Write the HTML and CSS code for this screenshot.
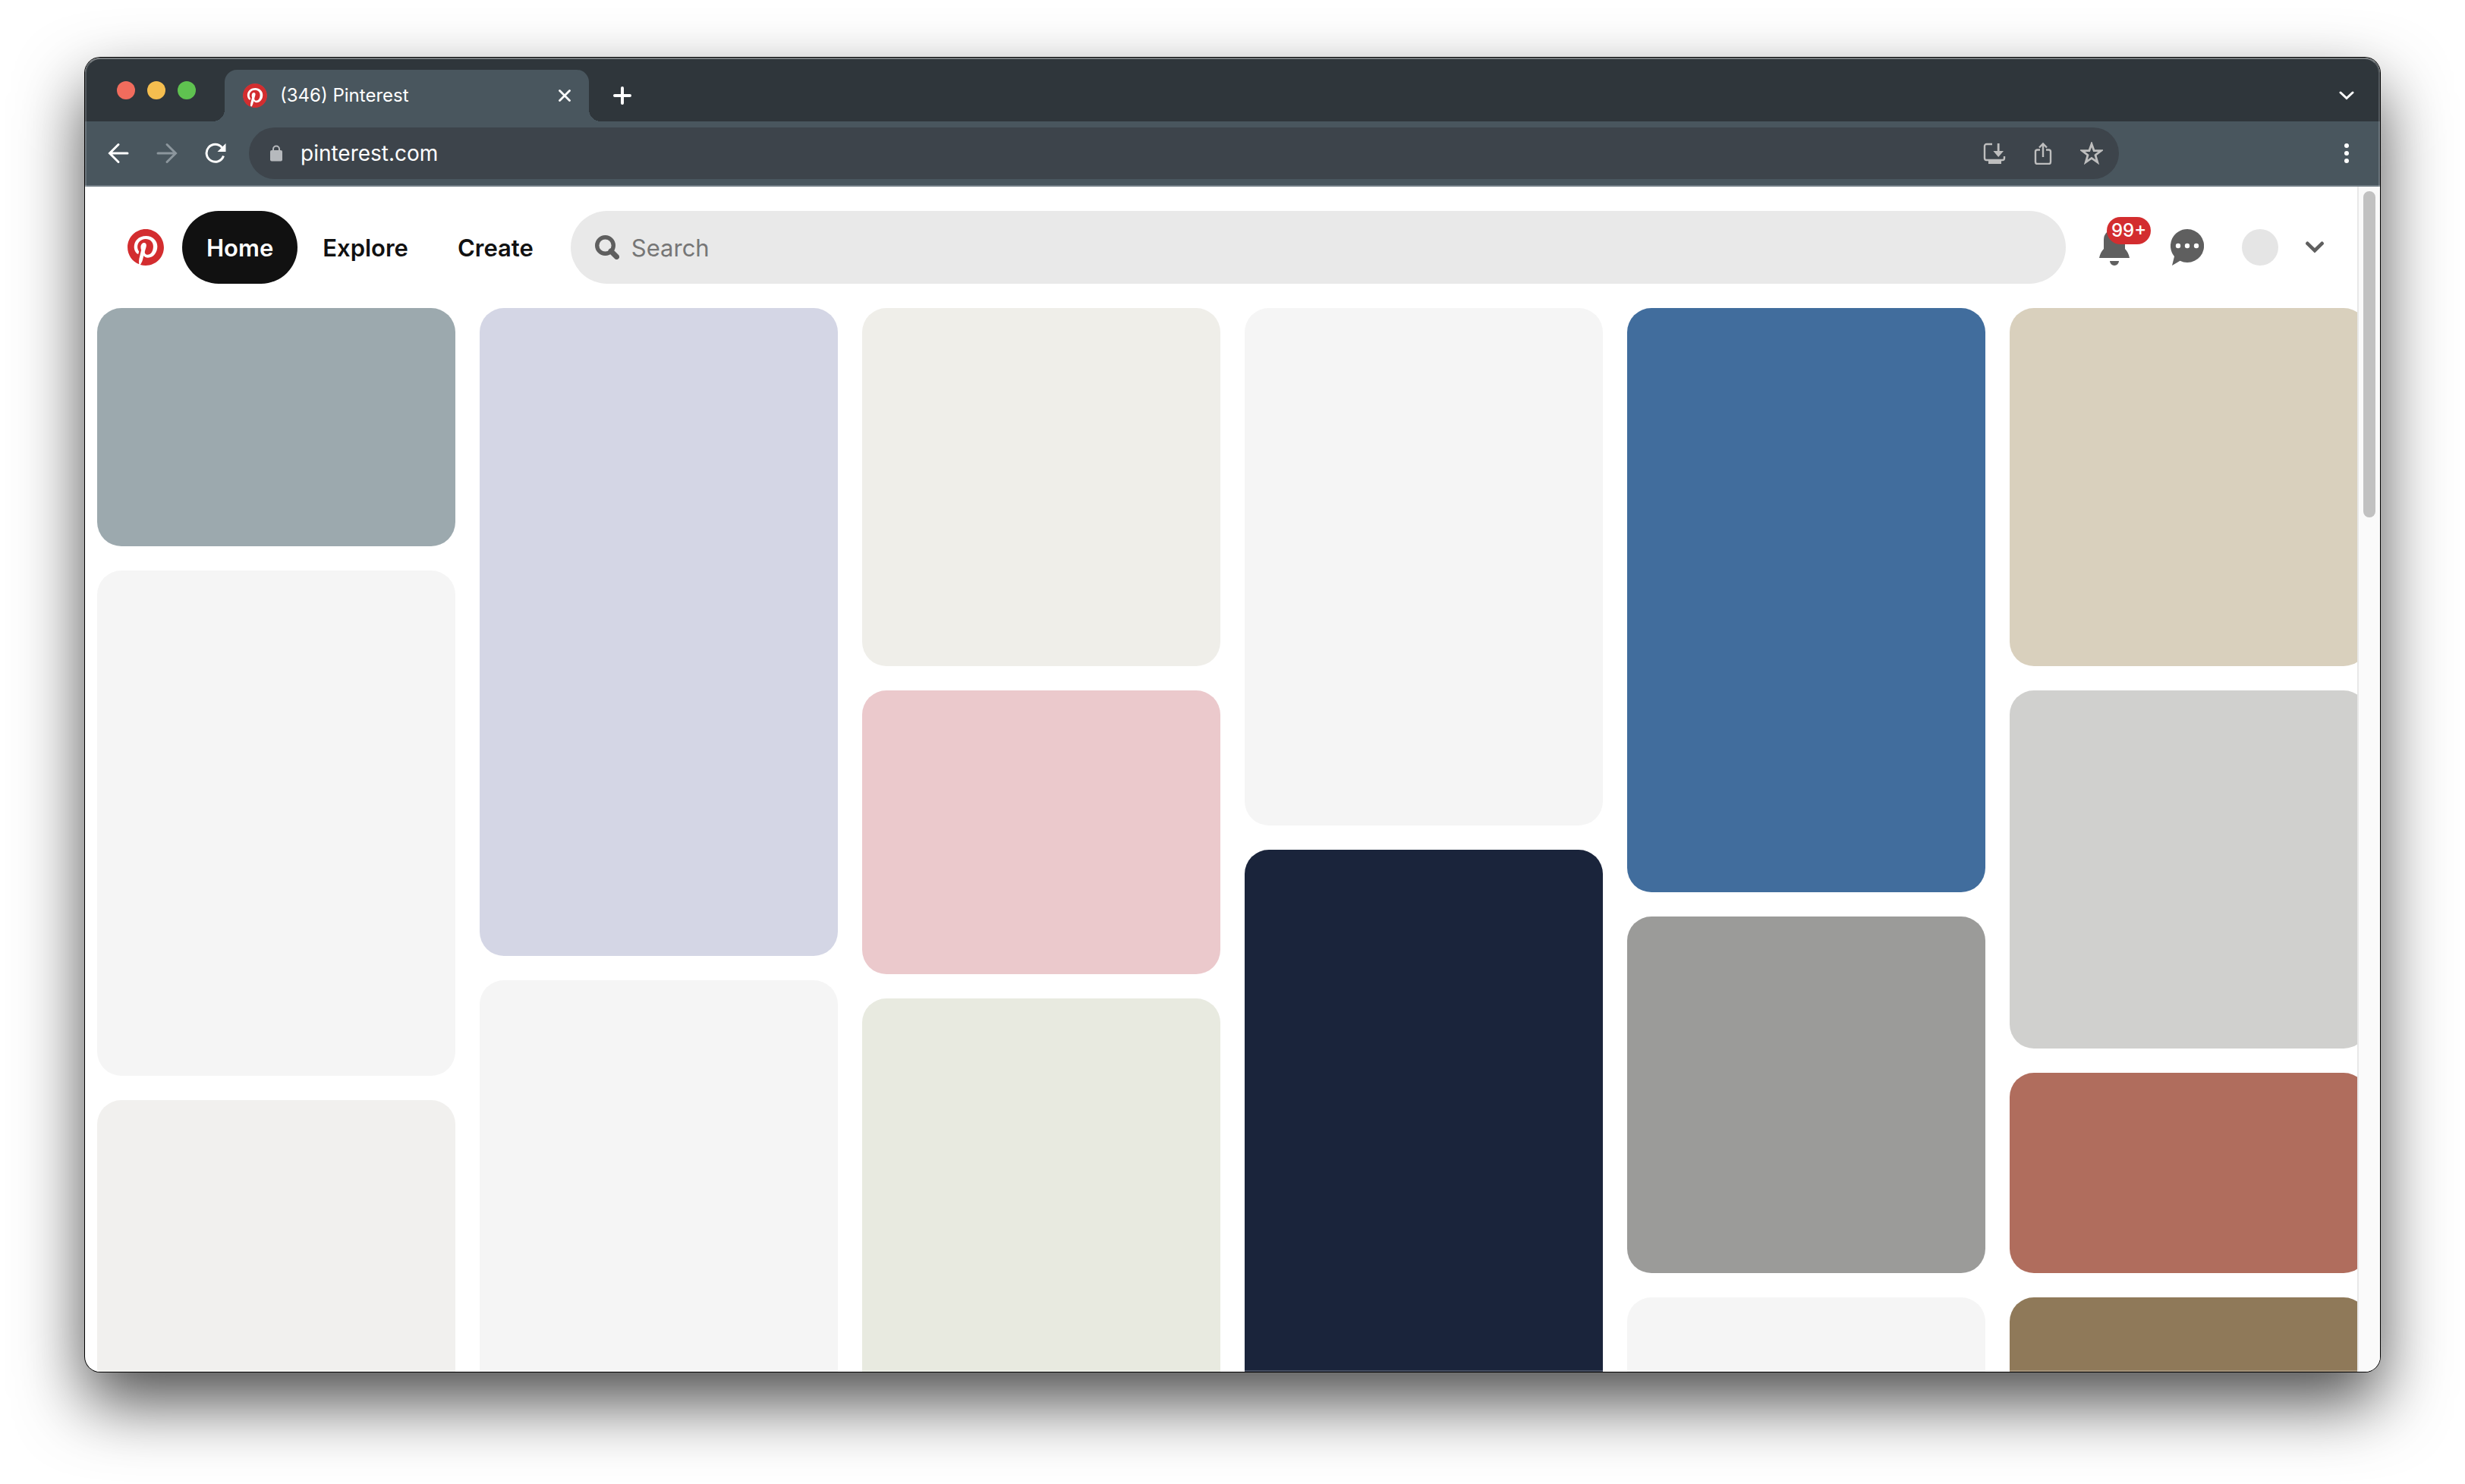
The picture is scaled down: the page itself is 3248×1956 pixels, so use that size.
FILE: index.html
```html
<!DOCTYPE html>
<html lang="en">
<head>
<meta charset="utf-8">
<meta name="viewport" content="width=device-width, initial-scale=1">
<title>(346) Pinterest</title>
<link rel="stylesheet" href="styles.css">
</head>
<body>
<svg class="defs" aria-hidden="true">
  <symbol id="pin-logo" viewBox="0 0 24 24">
    <circle cx="12" cy="12" r="11.500" fill="#fff"/>
    <path fill="#d32d2f" d="M12.017 0C5.396 0 .029 5.367.029 11.987c0 5.079 3.158 9.417 7.618 11.162-.105-.949-.199-2.403.041-3.439.219-.937 1.406-5.957 1.406-5.957s-.359-.72-.359-1.781c0-1.663.967-2.911 2.168-2.911 1.024 0 1.518.769 1.518 1.688 0 1.029-.653 2.567-.992 3.992-.285 1.193.6 2.165 1.775 2.165 2.128 0 3.768-2.245 3.768-5.487 0-2.861-2.063-4.869-5.008-4.869-3.41 0-5.409 2.562-5.409 5.199 0 1.033.394 2.143.889 2.741.099.12.112.225.085.345-.09.375-.293 1.199-.334 1.363-.053.225-.172.271-.401.165-1.495-.69-2.433-2.878-2.433-4.646 0-3.776 2.748-7.252 7.92-7.252 4.158 0 7.392 2.967 7.392 6.923 0 4.135-2.607 7.462-6.233 7.462-1.214 0-2.354-.629-2.758-1.379l-.749 2.848c-.269 1.045-1.004 2.352-1.498 3.146 1.123.345 2.306.535 3.55.535 6.607 0 11.985-5.365 11.985-11.987C23.97 5.39 18.592.026 11.985.026L12.017 0z"/>
  </symbol>
</svg>
<div class="window">
  <div class="tab-strip">
    <div class="lights"><span class="light red"></span><span class="light yellow"></span><span class="light green"></span></div>
    <div class="tab">
      <svg class="favicon" aria-hidden="true"><use href="#pin-logo"/></svg>
      <span class="tab-title">(346) Pinterest</span>
      <button class="icon-button" aria-label="Close tab"><svg width="16" height="16" viewBox="0 0 16 16"><path d="M1.500 1.500l13 13M14.500 1.500l-13 13" fill="none" stroke="#fff" stroke-width="2.800" stroke-linecap="round"/></svg></button>
    </div>
    <button class="icon-button new-tab" aria-label="New tab"><svg width="24" height="24" viewBox="0 0 24 24"><path d="M12 2v20M2 12h20" fill="none" stroke="#fff" stroke-width="4" stroke-linecap="round"/></svg></button>
    <button class="icon-button tab-search" aria-label="Search tabs"><svg width="20" height="12" viewBox="0 0 20 12"><path d="M2 2l8 7.500L18 2" fill="none" stroke="#fff" stroke-width="3" stroke-linecap="round"/></svg></button>
  </div>
  <div class="toolbar">
    <div class="history">
      <button class="icon-button" aria-label="Back"><svg width="28" height="28" viewBox="0 0 28 28"><path d="M26 14H3M14 2.500L2.500 14 14 25.500" fill="none" stroke="#fff" stroke-width="3" stroke-linecap="round"/></svg></button>
      <button class="icon-button" aria-label="Forward"><svg width="28" height="28" viewBox="0 0 28 28"><path d="M2 14h23M14 2.500L25.500 14 14 25.500" fill="none" stroke="#8c969d" stroke-width="3" stroke-linecap="round"/></svg></button>
      <button class="icon-button" aria-label="Reload"><svg width="28" height="28" viewBox="0 0 28 28"><path d="M24.500 17.500A11.500 11.500 0 1 1 22.500 6.500" fill="none" stroke="#fff" stroke-width="3"/><path d="M27.500 1v11h-11z" fill="#fff"/></svg></button>
    </div>
    <div class="address">
      <svg width="16" height="22" viewBox="0 0 16 22" aria-hidden="true"><rect y="7" width="16" height="14.500" rx="2" fill="#b6b9bd"/><path d="M4 8V5.500a4 4 0 0 1 8 0V8" fill="none" stroke="#b6b9bd" stroke-width="2"/></svg>
      <input class="url" aria-label="Address" value="pinterest.com">
      <div class="address-actions">
        <button class="icon-button" aria-label="Install app"><svg width="30" height="30" viewBox="0 0 30 30"><path d="M12 3H4.500A2.500 2.500 0 0 0 2 5.500v16A2.500 2.500 0 0 0 4.500 24h21a2.500 2.500 0 0 0 2.500-2.500V19" fill="none" stroke="#bebebe" stroke-width="2.400"/><path d="M7 24h17v5H7zM18.800 2h2.800v10h5.400l-6.800 8-6.800-8h5.400z" fill="#bebebe"/></svg></button>
        <button class="icon-button" aria-label="Share"><svg width="30" height="30" viewBox="0 0 30 30"><path d="M11 10.500H7.500A2.500 2.500 0 0 0 5 13v13.500A2.500 2.500 0 0 0 7.500 29h15a2.500 2.500 0 0 0 2.500-2.500V13a2.500 2.500 0 0 0-2.500-2.500H19M15 20V3M10 7.500l5-5 5 5" fill="none" stroke="#bebebe" stroke-width="2.400"/></svg></button>
        <button class="icon-button" aria-label="Bookmark"><svg width="30" height="30" viewBox="0 0 30 30"><path d="M15 2.800l3.100 8.700 9.300.2-7.400 5.800 2.700 9.300L15 21.400l-7.700 5.400L10 17.500l-7.400-5.800 9.300-.2z" fill="none" stroke="#bebebe" stroke-width="2.800"/></svg></button>
      </div>
    </div>
    <button class="icon-button more" aria-label="More"><svg width="6" height="26" viewBox="0 0 6 26"><circle cx="3" cy="3" r="3" fill="#fff"/><circle cx="3" cy="13" r="3" fill="#fff"/><circle cx="3" cy="23" r="3" fill="#fff"/></svg></button>
  </div>
  <div class="viewport">
    <div class="page">
      <header class="header">
        <a class="logo" href="#" aria-label="Pinterest"><svg width="48" height="48" aria-hidden="true"><use href="#pin-logo"/></svg></a>
        <nav class="nav"><a class="nav-link current" href="#">Home</a><a class="nav-link" href="#">Explore</a><a class="nav-link" href="#">Create</a></nav>
        <label class="search">
          <svg width="32" height="32" viewBox="0 0 32 32" aria-hidden="true"><circle cx="13.500" cy="13.500" r="10.800" fill="none" stroke="#5f5f5f" stroke-width="5.400"/><path d="M21 21l7.500 7.500" stroke="#5f5f5f" stroke-width="7" stroke-linecap="round"/></svg>
          <input class="search-input" type="search" placeholder="Search" aria-label="Search">
        </label>
        <div class="account">
          <button class="icon-button bell" aria-label="Notifications"><svg width="40" height="48" viewBox="0 0 40 48"><path d="M0 38c1-5 3-9 6-12V14a14 14 0 0 1 28 0v12c3 3 5 7 6 12zM14 42h12a6 6 0 0 1-12 0z" fill="#5f5f5f"/></svg><span class="badge">99+</span></button>
          <button class="icon-button chat" aria-label="Messages"><svg width="44" height="48" viewBox="0 0 44 48"><path d="M22 0a22 22 0 1 1-9.500 41.800L2 48l3-12A22 22 0 0 1 22 0z" fill="#5f5f5f"/><circle cx="10" cy="22" r="3.200" fill="#fff"/><circle cx="22" cy="22" r="3.200" fill="#fff"/><circle cx="34" cy="22" r="3.200" fill="#fff"/></svg></button>
          <button class="avatar" aria-label="Profile"></button>
          <button class="icon-button" aria-label="Account menu"><svg width="24" height="16" viewBox="0 0 24 16"><path d="M2.400 2.800l9.600 9.400 9.600-9.400" fill="none" stroke="#5f5f5f" stroke-width="4.600" stroke-linecap="round"/></svg></button>
        </div>
      </header>
      <main class="pins">
        <div class="column"><a class="pin slate" href="#" aria-label="Pin"></a><a class="pin mist tall-1" href="#" aria-label="Pin"></a><a class="pin pearl rest" href="#" aria-label="Pin"></a></div>
        <div class="column"><a class="pin lavender" href="#" aria-label="Pin"></a><a class="pin mist rest" href="#" aria-label="Pin"></a></div>
        <div class="column"><a class="pin ivory" href="#" aria-label="Pin"></a><a class="pin rose" href="#" aria-label="Pin"></a><a class="pin sage rest" href="#" aria-label="Pin"></a></div>
        <div class="column"><a class="pin mist tall-2" href="#" aria-label="Pin"></a><a class="pin navy rest" href="#" aria-label="Pin"></a></div>
        <div class="column"><a class="pin blue" href="#" aria-label="Pin"></a><a class="pin gray" href="#" aria-label="Pin"></a><a class="pin mist rest" href="#" aria-label="Pin"></a></div>
        <div class="column"><a class="pin sand" href="#" aria-label="Pin"></a><a class="pin silver" href="#" aria-label="Pin"></a><a class="pin clay" href="#" aria-label="Pin"></a><a class="pin olive rest" href="#" aria-label="Pin"></a></div>
      </main>
    </div>
    <div class="scrollbar"><div class="thumb"></div></div>
  </div>
</div>
</body>
</html>
```
FILE: styles.css
```css
* { box-sizing: border-box; }
html { height: 100%; background: #fff; }
body {
  margin: 0;
  height: 100%;
  padding: 76px 112px 148px;
  overflow: hidden;
  font-family: Inter, "Liberation Sans", sans-serif;
}
svg { display: block; flex: none; }
a { color: inherit; text-decoration: none; }
button, input { font: inherit; border: 0; padding: 0; background: none; color: inherit; }
input { outline: 0; min-width: 0; }
.defs { position: absolute; width: 0; height: 0; }

.window {
  position: relative;
  display: flex;
  flex-direction: column;
  height: 100%;
  border-radius: 20px;
  background: #fff;
  box-shadow: 0 0 0 1px #000, 0 40px 88px rgba(0, 0, 0, 0.7);
}
/* light rim along the inside edge of the frame */
.window::after {
  content: "";
  position: absolute;
  inset: 0;
  border: 2px solid rgba(255, 255, 255, 0.2);
  border-top-color: rgba(255, 255, 255, 0.35);
  border-radius: 20px;
  pointer-events: none;
}

.icon-button { display: flex; align-items: center; justify-content: center; }

.tab-strip {
  display: flex;
  align-items: center;
  height: 84px;
  padding: 16px 34px 0 42px;
  border-radius: 20px 20px 0 0;
  background: #2f363b;
}
.lights { display: flex; gap: 16px; width: 142px; padding-bottom: 14px; }
.light { width: 24px; height: 24px; border-radius: 50%; }
.red { background: #f16c5d; }
.yellow { background: #f5be4f; }
.green { background: #5fc250; }
.tab {
  position: relative;
  display: flex;
  align-items: center;
  gap: 17px;
  width: 480px;
  height: 68px;
  padding: 0 24px;
  border-radius: 16px 16px 0 0;
  background: #49565e;
  color: #fff;
}
/* flared feet of the active tab */
.tab::before, .tab::after {
  content: "";
  position: absolute;
  bottom: 0;
  width: 16px;
  height: 16px;
}
.tab::before { right: 100%; background: radial-gradient(circle at 0 0, transparent 16px, #49565e 16px); }
.tab::after { left: 100%; background: radial-gradient(circle at 100% 0, transparent 16px, #49565e 16px); }
.favicon { width: 32px; height: 32px; }
.tab-title { flex: 1; font-size: 24px; line-height: 32px; white-space: nowrap; }
.new-tab { margin-left: 32px; }
.tab-search { margin-left: auto; }

.toolbar {
  display: flex;
  align-items: center;
  height: 86px;
  padding: 0 41px 0 30px;
  border-bottom: 2px solid #717d85;
  background: #49565e;
  color: #fff;
}
.history { display: flex; gap: 36px; padding-right: 30px; }
.address {
  display: flex;
  align-items: center;
  flex: 1;
  gap: 24px;
  height: 68px;
  margin-right: 297px;
  padding: 0 21px 0 28px;
  border-radius: 34px;
  background: #3d444b;
}
.url { flex: 1; font-size: 28px; line-height: 36px; }
.address-actions { display: flex; gap: 34px; }

.viewport { display: flex; flex: 1; min-height: 0; overflow: hidden; border-radius: 0 0 20px 20px; }
.page { display: flex; flex-direction: column; flex: 1; min-width: 0; overflow: hidden; }
.header {
  display: flex;
  align-items: center;
  flex: none;
  padding: 32px 44px 32px 56px;
  color: #111;
  font-size: 31px;
  line-height: 40px;
}
.logo { margin-right: 24px; }
.nav { display: flex; gap: 1px; margin-right: 17px; font-weight: 600; }
.nav-link { padding: 29px 32px 27px; border-radius: 48px; }
.current { background: #111; color: #fff; }
.search {
  display: flex;
  align-items: center;
  flex: 1;
  gap: 16px;
  height: 96px;
  padding: 0 32px;
  border-radius: 48px;
  background: #e9e9e9;
}
.search-input { flex: 1; padding-top: 2px; }
.search-input::placeholder { color: #767676; opacity: 1; }
.account { display: flex; align-items: center; margin-left: 44px; }
.bell { position: relative; margin-right: 54px; }
.badge {
  position: absolute;
  top: -16px;
  left: 10px;
  height: 36px;
  padding: 0 6px;
  border-radius: 18px;
  background: #d32d2f;
  color: #fff;
  font-size: 24px;
  font-weight: 500;
  line-height: 36px;
}
.chat { margin-right: 50px; }
.avatar { width: 48px; height: 48px; margin-right: 36px; border-radius: 50%; background: #e5e5e5; }

/* the last column runs past the page edge and is clipped */
.pins {
  display: grid;
  grid-template-columns: repeat(6, 1fr);
  gap: 32px;
  flex: 1;
  min-height: 0;
  margin: 0 -14px 0 16px;
}
.column { display: flex; flex-direction: column; gap: 32px; min-height: 0; }
.pin { flex: none; height: 472px; border-radius: 32px; }
.rest { flex: 1; min-height: 0; border-radius: 32px 32px 0 0; }
.slate { height: 314px; background: #9ca9ae; }
.tall-1 { height: 666px; }
.tall-2 { height: 682px; }
.mist { background: #f5f5f5; }
.pearl { background: #f1f0ee; }
.lavender { height: 854px; background: #d4d6e5; }
.ivory { background: #efeee9; }
.rose { height: 374px; background: #ebc9cc; }
.sage { background: #e8eae0; }
.navy { background: #1a243b; }
.blue { height: 770px; background: #416d9d; }
.gray { height: 470px; background: #9b9b99; }
.sand { background: #d9d0bd; }
.silver { background: #d0d0ce; }
.clay { height: 264px; background: #b06d5d; }
.olive { background: #8f7959; }

.scrollbar {
  flex: none;
  width: 30px;
  padding: 6px 6px 0;
  border-left: 2px solid #e8e8e8;
  background: #fafafa;
}
.thumb { width: 16px; height: 430px; border-radius: 8px; background: #c1c1c1; }
```
